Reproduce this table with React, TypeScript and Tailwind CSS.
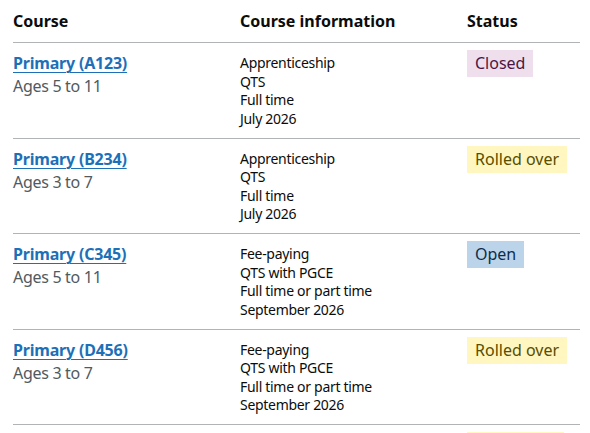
import React from 'react';

type Status = 'Closed' | 'Rolled over' | 'Open';

interface Course {
    name: string;
    ages: string;
    info: string[];
    status: Status;
}

const courses: Course[] = [
    { name: 'Primary (A123)', ages: 'Ages 5 to 11', info: ['Apprenticeship', 'QTS', 'Full time', 'July 2026'], status: 'Closed' },
    { name: 'Primary (B234)', ages: 'Ages 3 to 7', info: ['Apprenticeship', 'QTS', 'Full time', 'July 2026'], status: 'Rolled over' },
    { name: 'Primary (C345)', ages: 'Ages 5 to 11', info: ['Fee-paying', 'QTS with PGCE', 'Full time or part time', 'September 2026'], status: 'Open' },
    { name: 'Primary (D456)', ages: 'Ages 3 to 7', info: ['Fee-paying', 'QTS with PGCE', 'Full time or part time', 'September 2026'], status: 'Rolled over' },
];

const tagClass: Record<Status, string> = {
    'Closed': 'bg-[#efdfed] text-[#491644]',
    'Rolled over': 'bg-[#fff7bf] text-[#594d00]',
    'Open': 'bg-[#bbd4ea] text-[#0c2d4a]',
};

const StatusTag: React.FC<{ status: Status }> = ({ status }) => (
    <span className={`inline-block align-top h-[27px] px-2 text-[16px] leading-[27px] -mt-[3px] ${tagClass[status]}`}>
        {status}
    </span>
);

const App: React.FC = () => {
    return (
        <div className="bg-white min-h-screen pl-[13px] font-['Noto_Sans',sans-serif] text-[#0b0c0c]">
            <table className="w-[567px] border-collapse table-fixed">
                <thead>
                    <tr className="border-b border-[#b1b4b6]">
                        <th className="w-[227px] text-left font-bold text-[16px] leading-[22px] pt-[10px] pb-[10px] pr-5">Course</th>
                        <th className="w-[227px] text-left font-bold text-[16px] leading-[22px] pt-[10px] pb-[10px] pr-5">Course information</th>
                        <th className="text-left font-bold text-[16px] leading-[22px] pt-[10px] pb-[10px]">Status</th>
                    </tr>
                </thead>
                <tbody>
                    {courses.map((c) => (
                        <tr key={c.name} className="border-b border-[#b1b4b6] align-top">
                            <td className="pt-[10px] pb-[10px] pr-5">
                                <a href="#" className="block font-bold text-[16px] leading-[21px] tracking-[-0.2px] text-[#1d70b8] underline underline-offset-[3px] decoration-1">
                                    {c.name}
                                </a>
                                <span className="block text-[16px] leading-[21px] mt-[2px] tracking-[-0.3px] text-[#505a5f]">{c.ages}</span>
                            </td>
                            <td className="pt-[11px] pb-[9px] pr-5 text-[14px] leading-[18.625px] tracking-[-0.3px]">
                                {c.info.map((line) => (
                                    <div key={line}>{line}</div>
                                ))}
                            </td>
                            <td className="pt-[10px] pb-[10px]">
                                <StatusTag status={c.status} />
                            </td>
                        </tr>
                    ))}
                    {/* next row, only its tag edge shows */}
                    <tr className="align-top">
                        <td className="pt-[10px] pb-[10px] pr-5 h-[40px]"></td>
                        <td className="pt-[10px] pb-[10px] pr-5"></td>
                        <td className="pt-[10px] pb-[10px]">
                            <span className="inline-block align-top h-[27px] w-[97px] -mt-[3px] bg-[#fff7bf]"></span>
                        </td>
                    </tr>
                </tbody>
            </table>
        </div>
    );
};

export default App;
